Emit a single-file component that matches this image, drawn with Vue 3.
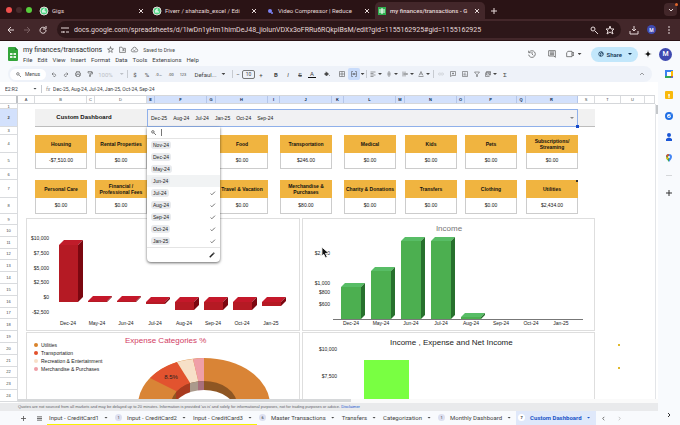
<script setup>
import { ref } from 'vue'

const tabs = [
  { title: 'Gigs', kind: 'fiverr' },
  { title: 'Fiverr / shahzaib_excel / Edi', kind: 'fiverr' },
  { title: 'Video Compressor | Reduce', kind: 'video' },
  { title: 'my finances/transactions - G', kind: 'sheets', active: true },
]
const url = ref('docs.google.com/spreadsheets/d/1lwDn1yHm1himDeJ48_jiolunVDXx3oFRRu6RQkplBsM/edit?gid=1155162925#gid=1155162925')
const cellName = ref('E2:R2')
const formula = ref('Dec-25, Aug-24, Jul-24, Jan-25, Oct-24, Sep-24')
const fontSize = ref('10')
const query = ref('')
const menus = ['File', 'Edit', 'View', 'Insert', 'Format', 'Data', 'Tools', 'Extensions', 'Help']

const icons = {
  undo: 'M5 3 2 6l3 3M2 6h6a3 3 0 0 1 0 5H5',
  redo: 'M7 3l3 3-3 3M10 6H4a3 3 0 0 0 0 5h3',
  print: 'M3 4V1h6v3M3 9H1V4h10v5H9M3 7h6v4H3z',
  paint: 'M2 1h7v3H2zM9 2h2v4H6v2M5 8h2v3H5z',
  fill: 'M4 1l5 5-4 4-4-4 4-4M1 6h8M11 8v2',
  borders: 'M1 1h10v10H1zM6 1v10M1 6h10',
  merge: 'M4 1H1v10h3M8 1h3v10H8M1 6h4M7 6h4M4 4l2 2-2 2M8 4 6 6l2 2',
  align: 'M1 2h10M1 5h6M1 8h10M1 11h6',
  valign: 'M6 0v4M4 3l2 2 2-2M2 6h8M6 12V8M4 9l2-2 2 2',
  wrap: 'M2 1v10M6 1v10M3 6h8M9 4l2 2-2 2',
  rotate: 'M2 9l4-8 4 8M4 6h4M1 11h10',
  link: 'M5 4H3a2 2 0 0 0 0 4h2M7 4h2a2 2 0 0 1 0 4H7M4 6h4',
  comment: 'M1 1h10v8H4l-3 2zM6 3v4M4 5h4',
  chart: 'M1 1h10v10H1zM4 9V5M6 9V3M8 9V7',
  filter: 'M1 2h10L7 7v4H5V7z',
  views: 'M3 1h8v7H3zM1 3v8h8M3 3h8M5 5h4v3',
}
const toolsA = ['undo', 'redo', 'print', 'paint']
const toolsD = ['align', 'valign', 'wrap', 'rotate']
const toolsE = ['link', 'comment', 'chart', 'filter']

const columns = ['A', 'B', 'C', 'D', 'E', 'F', 'G', 'H', 'I', 'J', 'K', 'L', 'M', 'N', 'O', 'P', 'Q', 'R', 'S', 'T', 'U', '']
const isSelected = (i) => i >= 4 && i <= 17

const chosen = ['Dec-25', 'Aug-24', 'Jul-24', 'Jan-25', 'Oct-24', 'Sep-24']
const options = [
  ['Nov-24', false], ['Dec-24', false], ['May-24', false], ['Jun-24', false], ['Jul-24', true],
  ['Aug-24', true], ['Sep-24', true], ['Oct-24', true], ['Jan-25', true],
]
const cards = [
  [['Housing', '-$7,510.00'], ['Rental Properties', '$0.00'], ['', ''], ['Food', '$0.00'], ['Transportation', '$246.00'],
    ['Medical', '$0.00'], ['Kids', '$0.00'], ['Pets', '$0.00'], ['Subscriptions/ Streaming', '$0.00']],
  [['Personal Care', '$0.00'], ['Financial / Professional Fees', '$0.00'], ['', ''], ['Travel & Vacation', '$0.00'], ['Merchandise & Purchases', '$80.00'],
    ['Charity & Donations', '$0.00'], ['Transfers', '$0.00'], ['Clothing', '$0.00'], ['Utilities', '$2,434.00']],
]

const months = ['Dec-24', 'May-24', 'Jun-24', 'Jul-24', 'Aug-24', 'Sep-24', 'Oct-24', 'Jan-25']
const redTicks = [['$10,000', 20], ['$7,500', 35], ['$5,000', 50], ['$2,500', 64], ['$0', 79], ['-$2,500', 94]]
/* front-face top and bottom of each month's bar */
const redBars = [[26, 83], [82, 83], [82, 83], [83, 85], [83, 91], [83, 91], [83, 91], [83, 87]]
  .map(([t, b], i) => ({ x: 32 + i * 29, t, b }))
const greenTicks = [['$2,000', 34], ['$1,000', 64], ['$800', 73], ['$600', 85]]
const greenBars = [68, 52, 22, 22, 98].map((t, i) => ({ x: 38 + i * 30, t, b: 100 }))
const face = (b, w) => `M${b.x} ${b.t}h${w}V${b.b}h${-w}z`
const lid = (b, w, dx, dy) => `M${b.x} ${b.t}l${dx} ${-dy}h${w}l${-dx} ${dy}z`
const side = (b, w, dx, dy) => `M${b.x + w} ${b.t}l${dx} ${-dy}V${b.b - dy}l${-dx} ${dy}z`

const legend = [['Utilities', '#d9822b'], ['Transportation', '#e2502b'], ['Recreation & Entertainment', '#f8dfc8'], ['Merchandise & Purchases', '#ef9da6']]
const sheets = [
  { name: 'Input - CreditCard1', yellow: true },
  { name: 'Input - CreditCard2', badge: '1', yellow: true },
  { name: 'Input - CreditCard3', yellow: true },
  { name: 'Master Transactions', badge: '6' },
  { name: 'Transfers' },
  { name: 'Categorization' },
  { name: 'Monthly Dashboard', badge: '1' },
  { name: 'Custom Dashboard', badge: '7', active: true },
]
</script>

<template>
  <div class="app">
    <nav class="tabbar" aria-label="Browser tabs">
      <div class="lights"><i class="red"></i><i class="dim"></i><i class="green"></i></div>
      <div class="tabs">
        <div v-for="t in tabs" :key="t.title" class="tab" :class="{ active: t.active }">
          <svg v-if="t.kind === 'fiverr'" class="fav" viewBox="0 0 8 8"><circle cx="4" cy="4" r="4" fill="#4fd584" /><path d="M3 6V3q0-1 2-1M2 4h3v2" fill="none" stroke="#fff" /></svg>
          <svg v-else-if="t.kind === 'video'" class="fav plain" viewBox="0 0 8 8"><circle cx="4" cy="4" r="2" fill="#7d83f5" /><circle cx="6" cy="6" r="1" fill="#7d83f5" /></svg>
          <svg v-else class="fav plain" viewBox="0 0 8 8"><path d="M0 0h8v8H0z" fill="#2fae4e" /><path d="M1 3h6M1 5h6M4 1v6" stroke="#fff" /></svg>
          <button class="tab-title">{{ t.title }}</button>
          <button class="close" aria-label="Close tab"><svg viewBox="0 0 4 4"><path d="M0 0l4 4M4 0 0 4" /></svg></button>
        </div>
        <button class="newtab" aria-label="New tab"><svg viewBox="0 0 6 6"><path d="M3 0v6M0 3h6" /></svg></button>
      </div>
      <button class="tabsearch" aria-label="Search tabs"><svg viewBox="0 0 6 4"><path d="M1 1l2 2 2-2" /></svg><i class="alert"></i></button>
    </nav>

    <div class="urlbar">
      <button class="nav" aria-label="Back"><svg viewBox="0 0 8 8"><path d="M4 1 1 4l3 3M1 4h6" /></svg></button>
      <button class="nav faded" aria-label="Forward"><svg viewBox="0 0 8 8"><path d="M4 1l3 3-3 3M1 4h6" /></svg></button>
      <button class="nav" aria-label="Reload"><svg viewBox="0 0 8 8"><path d="M7 4a3 3 0 1 1-1-2M7 0v3H4" /></svg></button>
      <div class="pill">
        <span class="site"><svg viewBox="0 0 8 8"><path d="M0 2h3M5 2h3M0 6h3M5 6h3M4 1v2M3 5v2" /></svg></span>
        <input v-model="url" class="url" aria-label="Address">
        <button class="nav" aria-label="Zoom"><svg viewBox="0 0 8 8"><circle cx="3" cy="3" r="2" /><path d="M5 5l3 3" /></svg></button>
        <button class="nav" aria-label="Bookmark"><svg viewBox="0 0 8 8"><path d="M4 0l1 3h3L6 5l1 3-3-2-3 2 1-3-2-2h3z" /></svg></button>
      </div>
      <button class="nav" aria-label="Downloads"><svg viewBox="0 0 8 8"><path d="M4 0v5M2 3l2 2 2-2M0 5v3h8V5" /></svg></button>
      <button class="me small">M</button>
      <button class="nav" aria-label="More"><svg viewBox="0 0 8 8"><path d="M4 0v2M4 3v2M4 6v2" /></svg></button>
    </div>

    <header class="head">
      <svg class="logo" viewBox="0 0 10 14"><path d="M1 0h6l3 3v10q0 1-1 1H1q-1 0-1-1V1q0-1 1-1z" fill="#34a53a" /><path d="M7 0l3 3H7z" fill="#1d7d2c" /><path d="M2 6h6v5H2z" fill="#e6f4e6" /><path d="M2 8.500h6M5 6v5" stroke="#34a53a" /></svg>
      <div class="titles">
        <div class="title-row">
          <h1>my finances/transactions</h1>
          <svg class="mini" viewBox="0 0 12 12"><path d="M6 1l1 4h4L8 7l1 4-3-2-3 2 1-4-3-2h4z" /></svg>
          <svg class="mini" viewBox="0 0 12 12"><path d="M1 2h4l1 2h5v7H1zM5 7h4M7 5l2 2-2 2" /></svg>
          <svg class="mini" viewBox="0 0 12 12"><path d="M3 10a2 2 0 0 1 0-5 3 3 0 0 1 6 0 2 2 0 0 1 0 5zM4 7l2 1 2-2" /></svg>
          <span class="saved">Saved to Drive</span>
        </div>
        <div class="menus"><button v-for="m in menus" :key="m">{{ m }}</button></div>
      </div>
      <div class="actions">
        <button class="act" aria-label="History"><svg viewBox="0 0 12 12"><path d="M2 3a5 5 0 1 1-1 4M1 1v3h3M6 3v3l2 2" /></svg></button>
        <button class="act" aria-label="Comments"><svg viewBox="0 0 12 12"><path d="M1 1h10v10L9 9H1zM3 3h6M3 5h6M3 7h6" /></svg></button>
        <button class="act meet" aria-label="Meet"><svg viewBox="0 0 12 12"><path d="M3 2h6v8H1V4zM9 5l2-2v6L9 7" /></svg><i class="caret"></i></button>
        <div class="share">
          <button class="share-main"><svg viewBox="0 0 8 8"><circle cx="4" cy="4" r="3" /><path d="M2 2l2 2-1 3M5 1v2l2 1" /></svg>Share</button>
          <button class="share-more" aria-label="Share options"><i class="caret"></i></button>
        </div>
        <svg class="spark" viewBox="0 0 8 8"><path d="M4 0q0 4 4 4-4 0-4 4 0-4-4-4 4 0 4-4z" /></svg>
        <button class="me">M</button>
      </div>
    </header>

    <div class="lower">
      <main class="work">
        <div class="toolbar" role="toolbar">
          <button class="search"><svg viewBox="0 0 8 8"><circle cx="3" cy="3" r="2" /><path d="M5 5l3 3" /></svg>Menus</button>
          <button v-for="k in toolsA" :key="k" class="tool" :aria-label="k"><svg viewBox="0 0 12 12"><path :d="icons[k]" /></svg></button>
          <button class="zoomsel">100%<i class="caret"></i></button>
          <span class="sep"></span>
          <button class="tool">$</button>
          <button class="tool">%</button>
          <button class="tool tiny">.0←</button>
          <button class="tool tiny">.00</button>
          <button class="tool tiny">123</button>
          <button class="fontsel">Defaul...<i class="caret"></i></button>
          <span class="sep"></span>
          <button class="tool step">−</button>
          <input v-model="fontSize" class="size" aria-label="Font size">
          <button class="tool">+</button>
          <button class="tool bold">B</button>
          <button class="tool"><em>I</em></button>
          <button class="tool"><s>S</s></button>
          <button class="tool"><u>A</u></button>
          <button class="tool wide" aria-label="Fill"><svg class="solid" viewBox="0 0 12 12"><path :d="icons.fill" /></svg></button>
          <button class="tool" aria-label="Borders"><svg viewBox="0 0 12 12"><path :d="icons.borders" /></svg></button>
          <button class="tool on" aria-label="Merge"><svg viewBox="0 0 12 12"><path :d="icons.merge" /></svg></button>
          <button class="mini-caret" aria-label="Merge options"><i class="caret"></i></button>
          <span class="sep"></span>
          <button v-for="k in toolsD" :key="k" class="tool drop" :aria-label="k"><svg viewBox="0 0 12 12"><path :d="icons[k]" /></svg><i class="caret"></i></button>
          <span class="sep"></span>
          <button v-for="k in toolsE" :key="k" class="tool" :class="k" :aria-label="k"><svg viewBox="0 0 12 12"><path :d="icons[k]" /></svg></button>
          <button class="tool drop" aria-label="views"><svg viewBox="0 0 12 12"><path :d="icons.views" /></svg><i class="caret"></i></button>
          <button class="tool">Σ</button>
          <button class="tool last" aria-label="Collapse"><svg viewBox="0 0 12 12"><path d="M2 8l4-4 4 4" /></svg></button>
        </div>

        <div class="formula">
          <input v-model="cellName" class="name" aria-label="Name box">
          <i class="caret"></i>
          <span class="sep"></span>
          <span class="fx">fx</span>
          <input v-model="formula" class="value" aria-label="Formula">
        </div>

        <div class="sheet">
          <div class="colheads">
            <span class="corner"></span>
            <div class="cols">
              <span v-for="(c, i) in columns" :key="i" :class="{ sel: isSelected(i) }">{{ c }}</span>
            </div>
          </div>
          <div class="body">
            <div class="rowheads">
              <span v-for="n in 24" :key="n" :class="{ sel: n === 2 }">{{ n }}</span>
            </div>
            <div class="canvas">
              <div class="cols pick">
                <div class="pick-title">Custom Dashboard</div>
                <div class="pick-cell">
                  <span v-for="c in chosen" :key="c">{{ c }}</span>
                  <i class="caret"></i>
                  <div class="menu">
                    <label class="find"><svg viewBox="0 0 8 8"><circle cx="3" cy="3" r="2" /><path d="M5 5l3 3" /></svg><span class="bar"></span><input v-model="query" aria-label="Search options"></label>
                    <button v-for="(o, i) in options" :key="o[0]" class="opt" :class="{ hover: i === 3 }">
                      <span>{{ o[0] }}</span>
                      <svg v-if="o[1]" viewBox="0 0 8 8"><path d="M1 4l2 2 5-5" /></svg>
                    </button>
                    <button class="edit" aria-label="Edit rule"><svg viewBox="0 0 8 8"><path d="M1 7l5-5" /><path d="M6 2l1-1" /></svg></button>
                  </div>
                </div>
                <div class="pick-end"></div>
              </div>

              <div v-for="(row, r) in cards" :key="r" class="cols cards">
                <dl v-for="(c, i) in row" :key="i" :class="{ note: r === 1 && i === 8 }">
                  <dt>{{ c[0] }}</dt>
                  <dd>{{ c[1] }}</dd>
                </dl>
              </div>

              <div class="charts">
                <figure class="left">
                  <svg viewBox="0 0 272 111" role="img" aria-label="Expenses by month">
                    <text v-for="t in redTicks" :key="t[0]" x="22" :y="t[1] + 1" class="tick end">{{ t[0] }}</text>
                    <g v-for="(b, i) in redBars" :key="i">
                      <path :d="face(b, 19)" fill="#b51a24" />
                      <path :d="lid(b, 19, 5, 5)" :fill="i === 0 ? '#c01c2a' : '#c4182a'" />
                      <path :d="side(b, 19, 5, 5)" fill="#7b0710" />
                      <text :x="b.x + 9" y="106" class="tick mid">{{ months[i] }}</text>
                    </g>
                  </svg>
                </figure>
                <figure class="right">
                  <svg viewBox="0 0 291 111" role="img" aria-label="Income by month">
                    <text x="146" y="12" class="caption">Income</text>
                    <text v-for="t in greenTicks" :key="t[0]" x="27" :y="t[1] + 2" class="tick end">{{ t[0] }}</text>
                    <g v-for="b in greenBars" :key="b.x">
                      <path :d="face(b, 20)" fill="#4caf50" />
                      <path :d="lid(b, 20, 4, 4)" fill="#58bd66" />
                      <path :d="side(b, 20, 4, 4)" fill="#27702d" />
                    </g>
                    <path d="M30 100h250v1H30z" fill="#777" />
                    <text v-for="(m, i) in months" :key="m" :x="48 + i * 30" y="106" class="tick mid">{{ m }}</text>
                  </svg>
                </figure>
                <figure class="left">
                  <svg viewBox="0 0 272 111" role="img" aria-label="Expense categories">
                    <defs><clipPath id="rim"><ellipse cx="177" cy="72" rx="33" ry="24" /></clipPath></defs>
                    <text x="98" y="10" class="heading pinkish">Expense Categories %</text>
                    <g v-for="(l, i) in legend" :key="l[0]">
                      <circle cx="9" :cy="12 + i * 8" r="2" :fill="l[1]" />
                      <text x="14" :y="14 + i * 8" class="tick">{{ l[0] }}</text>
                    </g>
                    <ellipse cx="177" cy="72" rx="66" ry="47" fill="#d98436" />
                    <path d="M177 72 123 45A66 47 0 0 1 150 29z" fill="#e2532f" />
                    <path d="M177 72 150 29A66 47 0 0 1 166 26z" fill="#f7e0c8" />
                    <path d="M177 72 166 26A66 47 0 0 1 177 25z" fill="#ef9fa8" />
                    <g clip-path="url(#rim)">
                      <path d="M144 48h66v48h-66z" fill="#8e5623" />
                      <path d="M149 48h14v48h-14z" fill="#a83a1f" />
                      <path d="M163 48h8v48h-8z" fill="#ab9a8c" />
                      <path d="M171 48h6v48h-6z" fill="#a9707c" />
                      <ellipse cx="177" cy="81" rx="33" ry="24" fill="#fff" />
                    </g>
                    <text x="144" y="46" class="pct">8.5%</text>
                  </svg>
                </figure>
                <figure class="right">
                  <svg viewBox="0 0 291 111" role="img" aria-label="Income, expense and net income">
                    <text x="87" y="12" class="heading">Income , Expense and Net Income</text>
                    <text x="34" y="18" class="tick end">$10,000</text>
                    <text x="34" y="45" class="tick end">$7,500</text>
                    <path d="M61 27h45v84H61z" fill="#79ff42" />
                  </svg>
                </figure>
                <div class="marks"><i></i><i></i></div>
              </div>
            </div>
            <div class="vscroll"><i></i></div>
            <svg class="pointer" viewBox="0 0 10 14"><path d="M1 1v10l2-2 2 4 2-1-2-4h4z" fill="#111" stroke="#fff" /></svg>
          </div>
          <div class="hscroll"><i></i></div>
        </div>

        <p class="notice">Quotes are not sourced from all markets and may be delayed up to 20 minutes. Information is provided 'as is' and solely for informational purposes, not for trading purposes or advice. <a href="#">Disclaimer</a></p>

        <nav class="sheets" aria-label="Sheets">
          <button class="sheet-ico" aria-label="Add sheet"><svg viewBox="0 0 6 6"><path d="M3 0v6M0 3h6" /></svg></button>
          <button class="sheet-ico" aria-label="All sheets"><svg viewBox="0 0 6 6"><path d="M0 1h6M0 3h6M0 5h6" /></svg></button>
          <button v-for="s in sheets" :key="s.name" class="sheet-tab" :class="{ active: s.active, yellow: s.yellow }">
            <span v-if="s.badge" class="badge">{{ s.badge }}</span>{{ s.name }}<i class="caret"></i>
          </button>
          <button class="sheet-ico" aria-label="Previous"><svg viewBox="0 0 6 6"><path d="M4 1 2 3l2 2" /></svg></button>
          <button class="sheet-ico pale" aria-label="Next"><svg viewBox="0 0 6 6"><path d="M2 1l2 2-2 2" /></svg></button>
        </nav>
      </main>

      <aside class="side">
        <svg viewBox="0 0 8 8"><path d="M0 0h8v8H0z" fill="#3b82f0" /><path d="M0 6h6v2H0z" fill="#34a853" /><path d="M6 1h2v5H6z" fill="#fbbc04" /><path d="M6 6h2L6 8z" fill="#ea4335" /><path d="M2 2h4v4H2z" fill="#fff" /></svg>
        <svg viewBox="0 0 8 8"><rect width="8" height="8" rx="1" fill="#f9b90c" /><circle cx="4" cy="4" r="1" fill="#fff" /><path d="M3 6h2" stroke="#fff" /></svg>
        <svg viewBox="0 0 8 8"><circle cx="4" cy="4" r="3" fill="none" stroke="#1f6fe5" stroke-width="2" /><path d="M3 4l1 1 3-4" fill="none" stroke="#63a0f5" /></svg>
        <svg viewBox="0 0 8 8"><circle cx="4" cy="2" r="2" fill="#1a56d6" /><path d="M1 8V6q3-3 6 0v2z" fill="#1a56d6" /></svg>
        <svg viewBox="0 0 8 8"><path d="M4 8Q1 5 1 3a3 3 0 0 1 3-3v8z" fill="#34a853" /><path d="M4 8q3-3 3-5a3 3 0 0 0-3-3z" fill="#4285f4" /><path d="M1 2a3 3 0 0 1 3-2l-1 3z" fill="#ea4335" /><path d="M4 4l-2 2-1-3z" fill="#fbbc04" /><circle cx="4" cy="3" r="1" fill="#fff" /></svg>
        <hr>
        <button aria-label="Get add-ons"><svg viewBox="0 0 8 8"><path d="M4 1v6M1 4h6" /></svg></button>
        <button class="foot" aria-label="Hide side panel"><svg viewBox="0 0 8 8"><path d="M3 2l2 2-2 2" /></svg></button>
      </aside>
    </div>
  </div>
</template>

<style>
body { margin: 0; }
</style>

<style scoped>
.app { display: flex; flex-direction: column; height: 100vh; overflow: hidden; background: #f8fafd; color: #3c4043; font: 6px Roboto, sans-serif; }
.app *, .app *::before, .app *::after { box-sizing: border-box; }
button, input { margin: 0; padding: 0; border: 0; background: none; color: inherit; font: inherit; outline: 0; min-width: 0; }
button { display: flex; align-items: center; justify-content: center; white-space: nowrap; flex: none; }
svg { display: block; flex: none; fill: none; stroke: currentColor; overflow: visible; }
.caret { flex: none; width: 4px; height: 2px; background: currentColor; clip-path: polygon(0 0, 100% 0, 50% 100%); }

.tabbar { display: flex; align-items: stretch; flex: none; height: 19px; background: #2a1315; color: #e6d9d9; }
.lights { display: flex; align-items: center; gap: 4px; width: 36px; padding-left: 6px; flex: none; }
.lights i { width: 6px; height: 6px; border-radius: 50%; }
.red { background: #f0504d; }
.dim { background: #462a2c; }
.green { background: #58cf3c; }
.tabs { display: flex; flex: 1; min-width: 0; padding-top: 2px; }
.tab { display: flex; align-items: center; flex: 0 1 113px; min-width: 0; padding: 0 6px 0 4px; gap: 4px; border-radius: 5px 5px 0 0; }
.tab.active { background: #43272a; padding-left: 3px; flex-basis: 110px; font-weight: 500; }
.fav { width: 8px; height: 8px; }
.plain { stroke: none; }
.tab-title { flex: 1; justify-content: flex-start; font-size: 6px; }
.close svg { width: 4px; height: 4px; }
.newtab { width: 18px; }
.newtab svg { width: 6px; height: 6px; }
.tabsearch { position: relative; align-self: center; width: 13px; height: 13px; margin-right: 3px; border-radius: 4px; background: #43272a; }
.tabsearch svg { width: 6px; height: 4px; }
.alert { position: absolute; top: 0; right: -1px; width: 3px; height: 3px; border-radius: 50%; background: #e0662c; }

.urlbar { display: flex; align-items: center; flex: none; height: 22px; padding: 0 3px; border-bottom: 1px solid #2a1315; background: #43272a; color: #e6d9d9; }
.nav { width: 16px; height: 16px; }
.nav svg, .site svg { width: 8px; height: 8px; }
.nav.faded { color: #7a6062; }
.pill { display: flex; align-items: center; flex: 1; height: 17px; margin: 0 5px 0 6px; padding: 0 3px; border-radius: 9px; background: #2d1719; }
.site { padding: 0 5px 0 1px; }
.url { flex: 1; font-size: 7px; }
.me { width: 13px; height: 13px; border-radius: 50%; background: #3f4ab0; color: #fff; font-size: 7px; font-weight: 500; }
.me.small { width: 9px; height: 9px; margin: 0 5px; font-size: 5px; }

.head { display: flex; align-items: center; flex: none; height: 25px; padding: 1px 8px 0; }
.logo { width: 10px; height: 14px; stroke: none; }
.titles { flex: 1; margin-left: 5px; }
.title-row { display: flex; align-items: center; gap: 5px; height: 10px; color: #444; }
h1 { margin: 0; font-size: 7px; line-height: 10px; font-weight: 400; color: #1f1f1f; }
.mini { width: 7px; height: 7px; }
.saved { font-size: 5px; }
.menus { display: flex; gap: 5px; height: 9px; }
.actions { display: flex; align-items: center; color: #444; }
.act { width: 20px; gap: 4px; }
.act svg { width: 8px; height: 8px; }
.meet { width: 24px; }
.share { display: flex; margin: 0 6px 0 5px; border-radius: 8px; background: #c2e7fb; color: #0b2d4d; }
.share-main { height: 15px; gap: 3px; padding: 0 0 0 7px; font-weight: 500; }
.share-main svg { width: 6px; height: 6px; }
.share-more { width: 16px; }
.spark { width: 8px; height: 8px; margin-right: 7px; fill: #111; stroke: none; }

.lower { display: flex; flex: 1; min-height: 0; }
.work { display: flex; flex-direction: column; flex: 1; min-width: 0; }
.toolbar { display: flex; align-items: center; flex: none; height: 16px; margin: 0 6px 0 8px; padding: 0 4px 0 2px; border-radius: 8px; background: #eef2f9; color: #444; }
.search { height: 11px; width: 36px; gap: 4px; margin-right: 2px; border-radius: 6px; background: #fff; font-size: 5px; }
.search svg { width: 5px; height: 5px; }
.tool { width: 12px; height: 12px; font-size: 6px; }
.tool svg { width: 6px; height: 6px; }
.tool .solid { fill: #444; }
.tiny { font-size: 4px; }
.bold { margin-left: 3px; font-weight: 700; }
.wide { width: 18px; }
.step { width: 8px; }
.drop { width: 16px; gap: 2px; }
.on { background: #c9dcfb; border-radius: 2px; }
.link { color: #b5b9bf; }
.last { margin-left: auto; }
.mini-caret { width: 5px; }
.tool u { text-decoration: none; border-bottom: 1px solid #111; padding: 0 2px; line-height: 6px; }
.zoomsel { width: 30px; gap: 7px; color: #bcc0c6; font-size: 6px; }
.fontsel { width: 42px; gap: 5px; }
.sep { flex: none; width: 1px; height: 8px; margin: 0 1px; background: #c7cbd1; }
.size { width: 13px; height: 9px; border: 1px solid #777; border-radius: 2px; font-size: 5px; text-align: center; }

.formula { display: flex; align-items: center; flex: none; height: 13px; padding-left: 5px; gap: 3px; background: #fff; font-size: 5px; }
.name { width: 25px; }
.fx { font-style: italic; color: #888; }
.value { flex: 1; font-size: 5px; }
.formula .sep { margin: 0 1px; }

.sheet { display: flex; flex-direction: column; flex: 1; min-height: 0; background: #fff; font-family: "Liberation Sans", sans-serif; }
.colheads { display: flex; flex: none; height: 9px; margin-right: 3px; border-block: 1px solid #d5d7da; }
.corner { flex: none; width: 18px; border-right: 2px solid #bfc2c6; }
.cols { display: grid; grid-template-columns: 17fr 52fr 8fr 52fr 8fr 52fr 9fr 52fr 12fr 52fr 12fr 52fr 9fr 52fr 8fr 52fr 9fr 52fr 17fr 26fr 24fr 10fr; }
.colheads .cols { flex: 1; }
.colheads .cols span { min-width: 0; border-right: 1px solid #d9dbde; font-size: 4px; line-height: 7px; text-align: center; }
.colheads .cols .sel { background: #d3e1fc; border-color: #b4c6ea; font-weight: 700; color: #041e49; }
.body { position: relative; display: flex; flex: 1; min-height: 0; }
.rowheads { flex: none; width: 18px; display: grid; grid-template-rows: 5px 18px 8px 18px 16px 11px 18px 16px 11px repeat(15, minmax(0, 1fr)); height: calc(100% + 3px); }
.rowheads span { display: flex; align-items: center; justify-content: center; overflow: hidden; border: solid #d9dbde; border-width: 0 1px 1px 0; background: #fff; font-size: 4px; }
.rowheads .sel { background: #d3e1fc; font-weight: 700; }
.canvas { flex: 1; min-width: 0; padding-top: 5px; overflow: hidden; }
.pick { height: 18px; }
.pick-title { grid-column: 2 / 5; padding-right: 14px; background: #f1f1f1; border-bottom: 1px solid #bdbdbd; color: #111; font-size: 6px; font-weight: 700; line-height: 17px; text-align: center; }
.pick-cell { position: relative; grid-column: 5 / 19; display: flex; align-items: center; gap: 6px; padding: 0 3px; border: 1px solid #8fb0ea; background: #f1f1f3; color: #222; font-size: 5px; }
.pick-cell::after { content: ""; position: absolute; right: -2px; bottom: -2px; width: 3px; height: 3px; background: #1549c9; }
.pick-cell > .caret { margin-left: auto; color: #888; }
.pick-end { background: #f1f1f1; border-bottom: 1px solid #bdbdbd; }
.menu { position: absolute; z-index: 2; left: -1px; top: 17px; width: 73px; padding-bottom: 1px; border-radius: 0 0 4px 4px; background: #fff; box-shadow: 0 1px 3px rgba(0, 0, 0, .6); }
.find { display: flex; align-items: center; gap: 5px; height: 12px; padding-left: 4px; border-bottom: 1px solid #e4e4e4; }
.find svg { width: 5px; height: 5px; }
.find input { flex: 1; }
.bar { width: 1px; height: 7px; background: #777; }
.opt { display: flex; justify-content: space-between; width: 100%; height: 12px; padding: 0 5px 0 4px; }
.opt span { padding: 0 2px; border-radius: 3px; background: #e8eaed; line-height: 8px; }
.opt svg { width: 5px; height: 5px; }
.hover { background: #f1f3f4; }
.edit { width: 100%; height: 14px; justify-content: flex-end; padding-right: 5px; border-top: 1px solid #e4e4e4; }
.edit svg { width: 6px; height: 6px; stroke-width: 2; }

.cards { margin-top: 8px; }
.cards + .cards { margin-top: 11px; }
.cards dl { position: relative; margin: 0; color: #111; }
.cards dl:nth-child(1) { grid-column: 2; }
.cards dl:nth-child(2) { grid-column: 4; }
.cards dl:nth-child(3) { grid-column: 6; }
.cards dl:nth-child(4) { grid-column: 8; }
.cards dl:nth-child(5) { grid-column: 10; }
.cards dl:nth-child(6) { grid-column: 12; }
.cards dl:nth-child(7) { grid-column: 14; }
.cards dl:nth-child(8) { grid-column: 16; }
.cards dl:nth-child(9) { grid-column: 18; }
.cards dt { display: flex; align-items: center; justify-content: center; height: 18px; background: #f0b440; font-size: 5px; font-weight: 700; line-height: 6px; text-align: center; }
.cards dd { height: 16px; margin: 0; border: 1px solid #ccc; border-top: 0; font-size: 5px; line-height: 15px; text-align: center; }
.note::after { content: ""; position: absolute; top: 0; right: 0; width: 2px; height: 2px; background: #333; }

.charts { position: relative; display: grid; grid-template-columns: 8fr 274fr 2fr 293fr 60fr; row-gap: 1px; margin-top: 4px; }
figure { margin: 0; border: 1px solid #dedede; background: #fff; }
.left { grid-column: 2; }
.right { grid-column: 4; }
figure svg { width: 100%; stroke: none; }
.tick { font-size: 5px; fill: #222; }
.end { text-anchor: end; }
.mid { text-anchor: middle; }
.caption { font-size: 8px; fill: #757575; text-anchor: middle; }
.heading { font-size: 8px; fill: #222; }
.pinkish { fill: #d23c64; }
.pct { text-anchor: middle; font-size: 6px; fill: #222; }
.marks { grid-column: 5; grid-row: 2; display: flex; flex-direction: column; gap: 21px; padding: 12px 0 0 23px; }
.marks i { width: 2px; height: 2px; background: #e0b92c; }
.vscroll { flex: none; width: 3px; padding-top: 1px; border-left: 1px solid #e3e5e8; }
.vscroll i { display: block; height: 9px; background: #c4c7ca; }
.pointer { position: absolute; left: 47%; top: 48%; width: 9px; height: 13px; margin-left: 12px; }
.hscroll { position: relative; flex: none; height: 4px; margin-left: 18px; background: #fafafa; }
.hscroll i { display: block; width: 52%; height: 3px; background: #d6d8da; }

.notice { flex: none; height: 8px; margin: 0; padding-left: 18px; overflow: hidden; background: #e9eaec; color: #5f6368; font: 4px/8px "Liberation Sans", sans-serif; white-space: nowrap; }
.notice a { color: #1155cc; text-decoration: none; }
.sheets { display: flex; flex: none; height: 14px; padding-left: 15px; white-space: nowrap; }
.sheet-ico { width: 16px; color: #555; }
.sheet-ico svg { width: 5px; height: 5px; }
.sheet-ico.pale { color: #bbb; }
.sheet-tab { padding: 0 5px 0 2px; gap: 5px; color: #444; border-bottom: 1px solid transparent; }
.sheet-tab.yellow { border-color: #f7f300; }
.sheet-tab.active { background: #dfe8fa; color: #1a56c8; font-weight: 700; }
.badge { width: 7px; height: 7px; border-radius: 50%; background: #dcdff0; color: #333; font-size: 4px; line-height: 7px; text-align: center; }
.active .badge { background: #fff; }

.side { display: flex; flex-direction: column; align-items: center; flex: none; width: 22px; padding: 4px 0 6px; gap: 13px; }
.side svg { width: 8px; height: 8px; stroke: none; }
.side button svg { stroke: #333; }
.side hr { width: 6px; margin: 0; border: 0; border-top: 1px solid #d5d7da; }
.side .foot { margin-top: auto; }
</style>
